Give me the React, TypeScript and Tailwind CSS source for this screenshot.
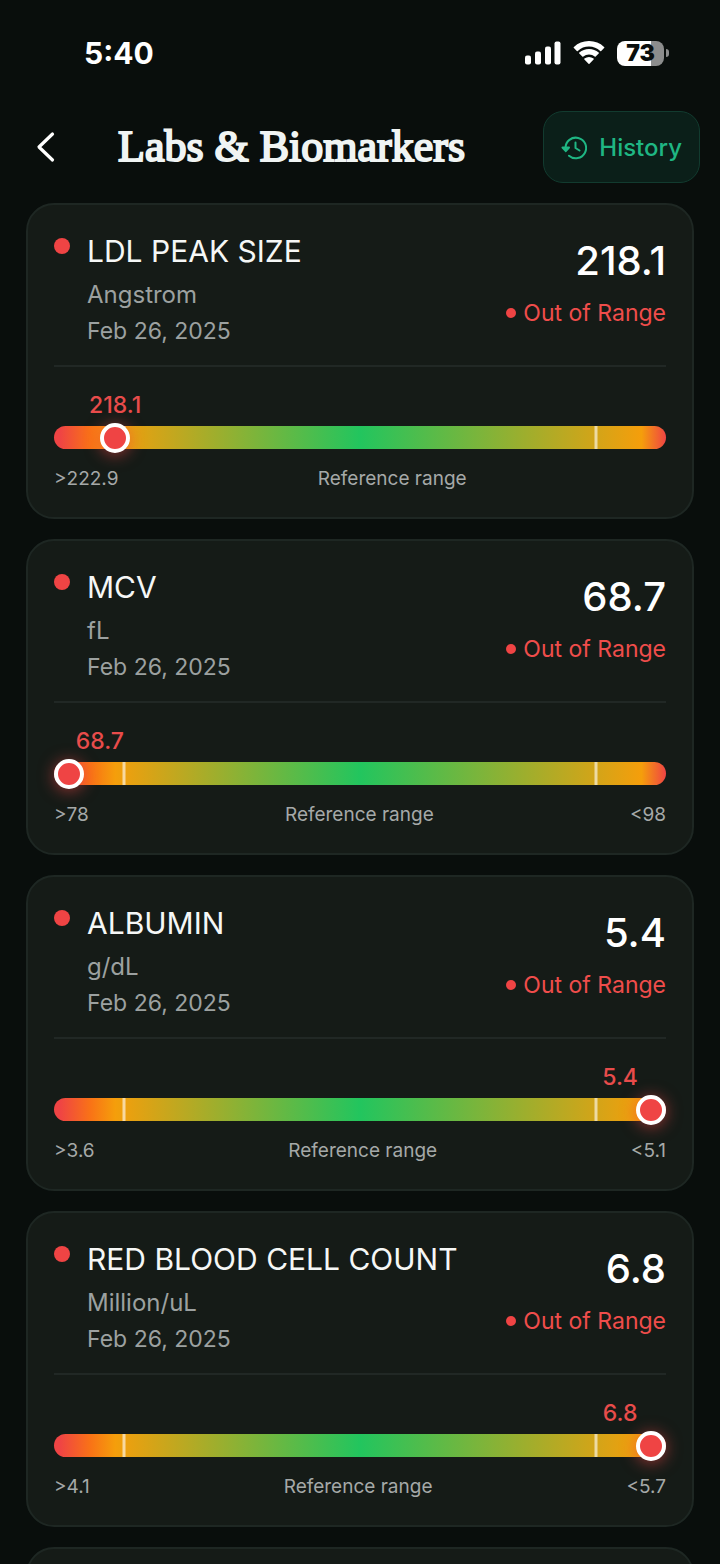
import { clsx } from "clsx"

type Marker = {
  name: string
  unit: string
  date: string
  value: string
  low: string
  high?: string
  position: number
  labelPosition: number
}

const markers: Marker[] = [
  { name: "LDL PEAK SIZE", unit: "Angstrom", date: "Feb 26, 2025", value: "218.1", low: ">222.9", position: 10, labelPosition: 10 },
  { name: "MCV", unit: "fL", date: "Feb 26, 2025", value: "68.7", low: ">78", high: "<98", position: 0, labelPosition: 7.5 },
  { name: "ALBUMIN", unit: "g/dL", date: "Feb 26, 2025", value: "5.4", low: ">3.6", high: "<5.1", position: 100, labelPosition: 92.5 },
  { name: "RED BLOOD CELL COUNT", unit: "Million/uL", date: "Feb 26, 2025", value: "6.8", low: ">4.1", high: "<5.7", position: 100, labelPosition: 92.5 },
]

const StatusBar = () => (
  <div className="flex h-[104px] items-center justify-between pl-[84px] pr-[51px] pt-[2px]">
    <span className="text-[30px] leading-9 font-bold">5:40</span>
    <div className="flex items-center gap-3">
      <svg width="37" height="24" viewBox="0 0 37 24" fill="currentColor" aria-label="Signal">
        <rect x="1" y="14.5" width="6" height="9" rx="2" />
        <rect x="11" y="10.5" width="6" height="13" rx="2" />
        <rect x="21" y="5.5" width="6" height="18" rx="2" />
        <rect x="30.5" y="0.5" width="6" height="23" rx="2" />
      </svg>
      <svg width="32" height="24" viewBox="0 0 32 24" fill="currentColor" aria-label="Wi-Fi">
        <path d="M16 5.5c4.3 0 8.200 1.7 11.200 4.400.3.3.7.3 1 0l2.900-2.900c.4-.4.4-.8 0-1.100A22 22 0 0 0 16 0 22 22 0 0 0 .9 5.900c-.4.3-.4.8 0 1.100l2.900 2.900c.3.3.7.3 1 0A16.500 16.500 0 0 1 16 5.500z" />
        <path d="M16 13.500c2.200 0 4.200.8 5.700 2.100.3.3.7.3 1 0l3-3c.4-.3.4-.8 0-1.100A15 15 0 0 0 16 8a15 15 0 0 0-9.700 3.500c-.4.3-.4.8 0 1.100l3 3c.3.3.7.3 1 0a9 9 0 0 1 5.700-2.100z" />
        <path d="M20.600 18.600c.3-.3.3-.8 0-1.100a8 8 0 0 0-9.200 0c-.4.3-.4.8 0 1.100l4.100 4.200c.3.3.7.3 1 0z" />
      </svg>
      <div className="flex items-center gap-[2px]">
        <div className="flex h-[25px] w-[47px] items-center justify-center rounded-[8px] bg-linear-to-r from-white from-72% to-[#8c8d8d] to-72%">
          <span className="text-[23px] leading-6 font-black text-[#0a0e0d]">73</span>
        </div>
        <span className="h-2 w-[3px] rounded-r-full bg-[#8c8d8d]" />
      </div>
    </div>
  </div>
)

const Header = () => (
  <header className="flex h-[99px] items-start justify-between pl-9 pr-5 pt-[7px]">
    <div className="flex h-[72px] items-center gap-[62px]">
      <button type="button" aria-label="Back" className="cursor-pointer">
        <svg width="20" height="32" viewBox="0 0 20 32" fill="none" stroke="currentColor" strokeWidth="3.2" strokeLinecap="round" strokeLinejoin="round">
          <path d="M16.500 3 3 16l13.500 13" />
        </svg>
      </button>
      <h1 className="font-['Liberation_Serif',serif] text-[44px] leading-[48px] text-[#f0f4f3] [-webkit-text-stroke:2px_#f0f4f3]">
        Labs &amp; Biomarkers
      </h1>
    </div>
    <button type="button" className="flex h-[72px] cursor-pointer items-center gap-3 rounded-[20px] border border-[#123b2f] bg-[#0b1f19] px-[17px] pt-[2px] text-2xl font-medium text-[#1fb683]">
      <svg width="26" height="24" viewBox="0 0 26 24" fill="none" stroke="currentColor" strokeWidth="2" strokeLinecap="round" strokeLinejoin="round">
        <path d="M4.500 12A10.300 10.300 0 1 1 8 19.700" />
        <path d="M14.500 6.500V12l4 2.500" />
        <path d="M1.500 11.500h6.500l-3.200 3.700z" fill="currentColor" />
      </svg>
      History
    </button>
  </header>
)

const RangeBar = ({ marker }: { marker: Marker }) => (
  <div>
    <div className="relative h-[30px]">
      <span
        className="absolute top-0 -translate-x-1/2 text-[23px] leading-[30px] font-medium text-[#e84c4b]"
        style={{ left: `${marker.labelPosition}%` }}
      >
        {marker.value}
      </span>
    </div>
    <div
      role="meter"
      aria-label={marker.name}
      aria-valuenow={Number(marker.value)}
      className="relative mt-[6px] h-[23px] rounded-full bg-[linear-gradient(to_right,#ef4444_1%,#f97316_6%,#f59e0b_10%,#22c55e_50%,#f59e0b_96%,#ef4444_100%)]"
    >
      <span className="absolute inset-y-0 left-[11.5%] w-[3px] -translate-x-1/2 bg-white/60" />
      <span className="absolute inset-y-0 left-[88.5%] w-[3px] -translate-x-1/2 bg-white/60" />
      <span
        className={clsx(
          "absolute top-1/2 size-[30px] -translate-y-1/2 rounded-full border-4 border-white bg-[#ef4444] shadow-[0_2px_16px_#ef444499]",
          marker.position === 0 && "left-0",
          marker.position === 100 && "right-0",
          marker.position > 0 && marker.position < 100 && "-translate-x-1/2",
        )}
        style={marker.position > 0 && marker.position < 100 ? { left: `${marker.position}%` } : undefined}
      />
    </div>
    <div className="mt-[18px] flex justify-between text-[19px] leading-6 text-[#a5a9a8]">
      <span>{marker.low}</span>
      <span>Reference range</span>
      <span>{marker.high}</span>
    </div>
  </div>
)

const MarkerCard = ({ marker }: { marker: Marker }) => (
  <article className="rounded-[28px] border-2 border-[#1e2723] bg-[#151b17] px-[26px] pt-[27px] pb-[26px]">
    <div className="flex justify-between border-b-2 border-[#212825] pb-4">
      <div className="flex gap-[17px]">
        <span className="mt-[6px] size-4 rounded-full bg-[#ef4444]" />
        <div>
          <h2 className="pt-px text-3xl leading-9 text-[#f5f7f6]">{marker.name}</h2>
          <p className="mt-2 text-2xl leading-9 text-[#9ca1a0]">{marker.unit}</p>
          <p className="text-[23px] leading-9 text-[#9ca1a0]">{marker.date}</p>
        </div>
      </div>
      <div className="flex flex-col items-end pt-1">
        <span className="text-[40px] leading-[50px] font-medium">{marker.value}</span>
        <span className="mt-[10px] flex items-center gap-[7px] text-[23px] leading-[34px] text-[#ef4d4b]">
          <span className="size-[10px] rounded-full bg-[#ef4444]" />
          Out of Range
        </span>
      </div>
    </div>
    <div className="pt-[23px]">
      <RangeBar marker={marker} />
    </div>
  </article>
)

const App = () => {
  return (
    <div className="h-screen overflow-hidden bg-[#090e0c] font-['Inter',sans-serif] text-white">
      <StatusBar />
      <Header />
      <main className="flex flex-col gap-5 px-[26px]">
        {markers.map((marker) => (
          <MarkerCard key={marker.name} marker={marker} />
        ))}
        <div className="h-[316px] rounded-[28px] border-2 border-[#1e2723] bg-[#151b17]" />
      </main>
    </div>
  )
}

export default App
